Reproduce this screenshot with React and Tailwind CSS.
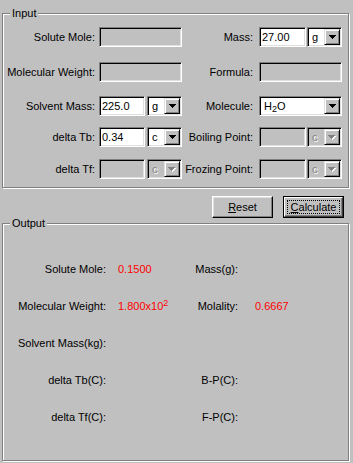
import React from "react";

const sunken =
  "border border-t-[#808080] border-l-[#808080] border-r-white border-b-white shadow-[inset_1px_1px_0_#000,inset_-1px_-1px_0_#dfdfdf] p-[1px]";

function Arrow({ disabled }) {
  if (disabled) {
    return (
      <svg width="8" height="5" viewBox="0 0 8 5" shapeRendering="crispEdges">
        <path d="M1 1h7v1H1zM2 2h5v1H2zM3 3h3v1H3zM4 4h1v1H4z" fill="#fff" />
        <path d="M0 0h7v1H0zM1 1h5v1H1zM2 2h3v1H2zM3 3h1v1H3z" fill="#808080" />
      </svg>
    );
  }
  return (
    <svg width="7" height="4" viewBox="0 0 7 4" shapeRendering="crispEdges">
      <path d="M0 0h7v1H0zM1 1h5v1H1zM2 2h3v1H2zM3 3h1v1H3z" fill="#000" />
    </svg>
  );
}

function Combo({ value, className, disabled }) {
  return (
    <div className={`flex h-[20px] ${sunken} ${disabled ? "bg-[#c0c0c0]" : "bg-white"} ${className}`}>
      <span
        className={`flex-1 pl-[3px] leading-[16px] ${disabled ? "text-[#808080] [text-shadow:1px_1px_0_#fff]" : "text-black"}`}
      >
        {value}
      </span>
      <div className="flex w-[16px] items-center justify-center border border-t-[#dfdfdf] border-l-[#dfdfdf] border-r-black border-b-black bg-[#c0c0c0] shadow-[inset_1px_1px_0_#fff,inset_-1px_-1px_0_#808080]">
        <Arrow disabled={disabled} />
      </div>
    </div>
  );
}

function Field({ value, className, disabled }) {
  return (
    <div
      className={`h-[20px] ${sunken} ${disabled ? "bg-[#c0c0c0]" : "bg-white"} pl-[2px] leading-[16px] ${className}`}
    >
      {value}
    </div>
  );
}

function GroupBox({ title, className, children }) {
  return (
    <div
      className={`relative mx-[2px] w-[347px] border border-[#808080] shadow-[inset_1px_1px_0_#fff,1px_1px_0_#fff] ${className}`}
    >
      <span className="absolute -top-[8px] left-[7px] bg-[#c0c0c0] px-[2px] leading-[14px]">
        {title}
      </span>
      {children}
    </div>
  );
}

function InRow({ label1, ctrl1, label2, ctrl2, className }) {
  return (
    <div className={`flex h-[20px] items-center ${className}`}>
      <span className="w-[92px] text-right">{label1}</span>
      <div className="ml-[4px] flex w-[83px] gap-[2px]">{ctrl1}</div>
      <span className="w-[71px] text-right">{label2}</span>
      <div className="ml-[6px] flex w-[83px] gap-[1px]">{ctrl2}</div>
    </div>
  );
}

function OutRow({ label1, value1, label2, value2 }) {
  return (
    <div className="flex h-[37px] items-center">
      <span className="w-[103px] text-right">{label1}</span>
      <span className="ml-[12px] w-[72px] text-[#ff0000]">{value1}</span>
      <span className="w-[48px] text-right">{label2}</span>
      <span className="ml-[17px] text-[#ff0000]">{value2}</span>
    </div>
  );
}

export default function App() {
  return (
    <div className="h-[463px] w-[353px] overflow-hidden bg-[#c0c0c0] pt-[13px] font-['Liberation_Sans',Arial,sans-serif] text-[11px] text-black">
      {/* Input */}
      <GroupBox title="Input" className="h-[175px]">
        <InRow
          className="mt-[13px]"
          label1="Solute Mole:"
          ctrl1={<Field className="w-[83px]" disabled />}
          label2="Mass:"
          ctrl2={
            <>
              <Field className="w-[47px]" value="27.00" />
              <Combo className="w-[35px]" value="g" />
            </>
          }
        />
        <InRow
          className="mt-[15px]"
          label1="Molecular Weight:"
          ctrl1={<Field className="w-[83px]" disabled />}
          label2="Formula:"
          ctrl2={<Field className="w-[83px]" disabled />}
        />
        <InRow
          className="mt-[14px]"
          label1="Solvent Mass:"
          ctrl1={
            <>
              <Field className="w-[46px]" value="225.0" />
              <Combo className="w-[35px]" value="g" />
            </>
          }
          label2="Molecule:"
          ctrl2={
            <Combo
              className="w-[83px]"
              value={
                <>
                  H<sub className="text-[9px]">2</sub>O
                </>
              }
            />
          }
        />
        <InRow
          className="mt-[11px]"
          label1="delta Tb:"
          ctrl1={
            <>
              <Field className="w-[46px]" value="0.34" />
              <Combo className="w-[35px]" value="c" />
            </>
          }
          label2="Boiling Point:"
          ctrl2={
            <>
              <Field className="w-[47px]" disabled />
              <Combo className="w-[35px]" value="c" disabled />
            </>
          }
        />
        <InRow
          className="mt-[12px]"
          label1="delta Tf:"
          ctrl1={
            <>
              <Field className="w-[46px]" disabled />
              <Combo className="w-[35px]" value="c" disabled />
            </>
          }
          label2="Frozing Point:"
          ctrl2={
            <>
              <Field className="w-[47px]" disabled />
              <Combo className="w-[35px]" value="c" disabled />
            </>
          }
        />
      </GroupBox>

      {/* Buttons */}
      <div className="mt-[8px] flex h-[22px] pl-[212px]">
        <button className="h-[22px] w-[61px] border border-t-white border-l-white border-r-black border-b-black bg-[#c0c0c0] shadow-[inset_-1px_-1px_0_#808080,inset_1px_1px_0_#dfdfdf]">
          <span className="underline">R</span>eset
        </button>
        <button className="ml-[10px] h-[22px] w-[61px] border border-black bg-[#c0c0c0] p-0">
          <div className="flex h-full w-full items-center justify-center border border-t-white border-l-white border-r-[#404040] border-b-[#404040] shadow-[inset_-1px_-1px_0_#808080] p-[2px]">
            <div className="flex h-full w-full items-center justify-center border border-dotted border-black">
              <span className="underline">C</span>alculate
            </div>
          </div>
        </button>
      </div>

      {/* Output */}
      <GroupBox title="Output" className="mt-[5px] h-[238px]">
        <div className="mt-[27px]">
          <OutRow label1="Solute Mole:" value1="0.1500" label2="Mass(g):" />
          <OutRow
            label1="Molecular Weight:"
            value1={
              <>
                1.800x10<sup className="text-[9px]">2</sup>
              </>
            }
            label2="Molality:"
            value2="0.6667"
          />
          <OutRow label1="Solvent Mass(kg):" />
          <OutRow label1="delta Tb(C):" label2="B-P(C):" />
          <OutRow label1="delta Tf(C):" label2="F-P(C):" />
        </div>
      </GroupBox>
    </div>
  );
}
